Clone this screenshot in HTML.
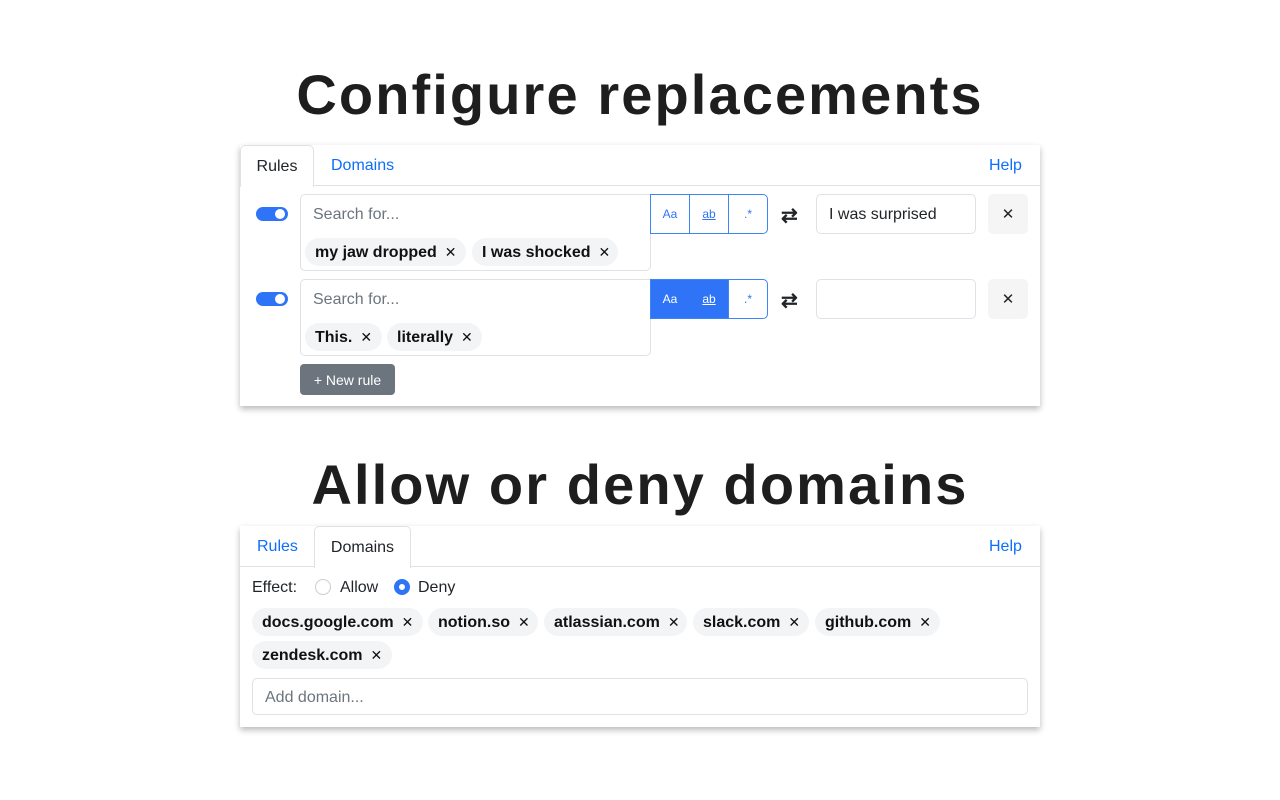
<!DOCTYPE html>
<html><head><meta charset="utf-8"><style>
*{box-sizing:border-box;margin:0;padding:0}
body{width:1280px;height:800px;background:#fff;position:relative;font-family:"Liberation Sans",sans-serif;color:#212529;overflow:hidden}
.a{position:absolute}
h1{position:absolute;left:0;width:1280px;text-align:center;font-size:56px;font-weight:700;color:#1e1e1e;letter-spacing:2.1px}
.panel{position:absolute;left:240px;width:800px;background:#fff;box-shadow:0 3px 6px rgba(0,0,0,.28)}
.tabline{position:absolute;left:0;width:800px;height:1px;background:#dee2e6}
.tab{position:absolute;font-size:16px;line-height:42px;text-align:center}
.tab.act{border:1px solid #dee2e6;border-bottom:none;border-radius:5px 5px 0 0;background:#fff;height:42px}
.link{color:#0d6efd}
.box{position:absolute;border:1px solid #dee2e6;border-radius:5px;background:#fff}
.ph{position:absolute;font-size:16px;color:#6c757d}
.chip{position:absolute;height:28px;background:#f3f4f6;border-radius:14px;font-weight:700;font-size:16px;line-height:29px;padding-left:10px;color:#111}
.chip span{font-weight:400;margin-left:8px;font-size:14px}
.tog{position:absolute;width:32px;height:14px;border-radius:8px;background:#2f74f6}
.tog:after{content:"";position:absolute;right:3px;top:2px;width:10px;height:10px;border-radius:5px;background:#fff}
.grp{position:absolute;width:118px;height:40px;border:1px solid #3d85f7;border-radius:0 5px 5px 0;display:flex;overflow:hidden}
.grp div{flex:1;font-size:12px;color:#2f74f6;text-align:center;line-height:38px}
.grp div+div{border-left:1px solid #3d85f7}
.grp .on{background:#2f74f6;color:#fff;border-left-color:#2f74f6!important}
.del{position:absolute;width:40px;height:40px;background:#f5f5f6;border-radius:5px;text-align:center;line-height:42px;font-size:15px}
</style></head><body>
<h1 style="top:62px">Configure replacements</h1>
<div class="panel" style="top:145px;height:261px">
 <div class="tabline" style="top:40px"></div>
 <div class="tab act" style="left:0;width:74px;top:0">Rules</div>
 <div class="tab link" style="left:91px;top:0">Domains</div>
 <div class="tab link" style="left:749px;top:0">Help</div>

 <div class="tog" style="left:16px;top:62px"></div>
 <div class="box" style="left:60px;top:49px;width:351px;height:77px;border-radius:5px 0 5px 5px"></div>
 <div class="ph" style="left:73px;top:61px">Search for...</div>
 <div class="chip" style="left:65px;top:93px;width:161px">my jaw dropped<span>✕</span></div>
 <div class="chip" style="left:232px;top:93px;width:146px">I was shocked<span>✕</span></div>
 <div class="grp" style="left:410px;top:49px"><div>Aa</div><div><u>ab</u></div><div>.*</div></div>
 <div class="a" style="left:541px;top:58px;font-size:20px;font-weight:700">⇄</div>
 <div class="box" style="left:576px;top:49px;width:160px;height:40px"></div>
 <div class="a" style="left:589px;top:61px;font-size:16px">I was surprised</div>
 <div class="del" style="left:748px;top:49px">✕</div>

 <div class="tog" style="left:16px;top:147px"></div>
 <div class="box" style="left:60px;top:134px;width:351px;height:77px;border-radius:5px 0 5px 5px"></div>
 <div class="ph" style="left:73px;top:146px">Search for...</div>
 <div class="chip" style="left:65px;top:178px;width:77px">This.<span>✕</span></div>
 <div class="chip" style="left:147px;top:178px;width:95px">literally<span>✕</span></div>
 <div class="grp" style="left:410px;top:134px"><div class="on">Aa</div><div class="on"><u>ab</u></div><div>.*</div></div>
 <div class="a" style="left:541px;top:143px;font-size:20px;font-weight:700">⇄</div>
 <div class="box" style="left:576px;top:134px;width:160px;height:40px"></div>
 <div class="del" style="left:748px;top:134px">✕</div>

 <div class="a" style="left:60px;top:219px;width:95px;height:31px;background:#6c757d;border-radius:4px;color:#fff;font-size:14px;line-height:32px;text-align:center">+ New rule</div>
</div>

<h1 style="top:452px">Allow or deny domains</h1>
<div class="panel" style="top:526px;height:201px">
 <div class="tabline" style="top:40px"></div>
 <div class="tab link" style="left:17px;top:0">Rules</div>
 <div class="tab act" style="left:74px;width:97px;top:0">Domains</div>
 <div class="tab link" style="left:749px;top:0">Help</div>
 <div class="a" style="left:12px;top:53px;font-size:16px">Effect:</div>
 <div class="a" style="left:75px;top:53px;width:16px;height:16px;border:1px solid #ccc;border-radius:50%"></div>
 <div class="a" style="left:100px;top:53px;font-size:16px">Allow</div>
 <div class="a" style="left:154px;top:53px;width:16px;height:16px;border:5px solid #2f74f6;border-radius:50%"></div>
 <div class="a" style="left:178px;top:53px;font-size:16px">Deny</div>
 <div class="chip" style="left:12px;top:82px;width:171px">docs.google.com<span>✕</span></div>
 <div class="chip" style="left:188px;top:82px;width:110px">notion.so<span>✕</span></div>
 <div class="chip" style="left:304px;top:82px;width:143px">atlassian.com<span>✕</span></div>
 <div class="chip" style="left:453px;top:82px;width:116px">slack.com<span>✕</span></div>
 <div class="chip" style="left:575px;top:82px;width:125px">github.com<span>✕</span></div>
 <div class="chip" style="left:12px;top:115px;width:140px">zendesk.com<span>✕</span></div>
 <div class="box" style="left:12px;top:152px;width:776px;height:37px"></div>
 <div class="ph" style="left:25px;top:163px">Add domain...</div>
</div>
</body></html>
